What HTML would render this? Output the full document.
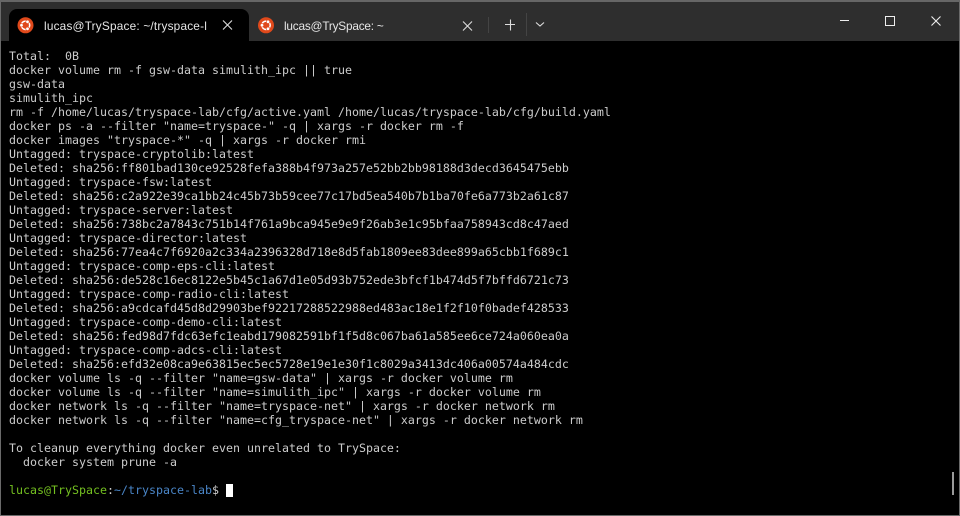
<!DOCTYPE html>
<html><head><meta charset="utf-8"><style>
html,body{margin:0;padding:0;background:#000}
#w{position:relative;width:960px;height:516px;overflow:hidden;background:#000}
#bar{position:absolute;left:0;top:0;width:960px;height:41px;background:#2e2e2e}
#edge{position:absolute;left:0;top:0;width:958px;height:514px;border:1px solid #6a6a6a;z-index:5}
#edge2{position:absolute;left:0;top:0;width:960px;height:2px;background:#666;z-index:5}
#tab{position:absolute;left:9px;top:9px;width:240px;height:32px;background:#000;border-radius:8px 8px 0 0}
.t{position:absolute;font:11.8px/16px "Liberation Sans","DejaVu Sans",sans-serif;color:#e6e6e6;white-space:nowrap;overflow:hidden}
pre{position:absolute;left:9px;top:49px;margin:0;font:11.63px/14px "DejaVu Sans Mono","Liberation Mono",monospace;color:#ccc;white-space:pre;letter-spacing:0}
.g{color:#74c020}.b{color:#4a86c8}
#cur{position:absolute;left:226px;top:484px;width:7px;height:13px;background:#fff}
#sb{position:absolute;left:952px;top:472px;width:2px;height:23px;background:#9a9a9a}
svg{position:absolute;overflow:visible}
</style></head><body><div id="w">
<div id="bar"></div><div id="edge"></div><div id="edge2"></div><div id="tab"></div>
<svg style="left:0;top:0" width="960" height="41" fill="none">
<g transform="translate(-.5 .3)"><circle cx="26" cy="25" r="8" fill="#e0491b"/><circle cx="26" cy="25" r="4.2" stroke="#fff" stroke-width="1.5"/><circle cx="22" cy="25" r="1.7" fill="#fff" stroke="#e0491b" stroke-width=".6"/><circle cx="28" cy="21.500" r="1.7" fill="#fff" stroke="#e0491b" stroke-width=".6"/><circle cx="28" cy="28.500" r="1.7" fill="#fff" stroke="#e0491b" stroke-width=".6"/></g>
<g transform="translate(240 .3)"><circle cx="26" cy="25" r="8" fill="#e0491b"/><circle cx="26" cy="25" r="4.2" stroke="#fff" stroke-width="1.5"/><circle cx="22" cy="25" r="1.7" fill="#fff" stroke="#e0491b" stroke-width=".6"/><circle cx="28" cy="21.500" r="1.7" fill="#fff" stroke="#e0491b" stroke-width=".6"/><circle cx="28" cy="28.500" r="1.7" fill="#fff" stroke="#e0491b" stroke-width=".6"/></g>
<path d="M223 20.500l9 9M232 20.500l-9 9" stroke="#ddd" stroke-width="1.1"/>
<path d="M463 21.500l9 9M472 21.500l-9 9" stroke="#ddd" stroke-width="1.1"/>
<path d="M488.500 17v16M526.500 13v23" stroke="#444"/>
<path d="M505 24.500h10M510.500 19.500v11" stroke="#ddd" stroke-width="1.1"/>
<path d="M536 22.500l4 3.500 4-3.500" stroke="#ddd" stroke-width="1.1"/>
<path d="M840 20.500h9" stroke="#eee"/>
<rect x="885.500" y="16.500" width="9" height="9" stroke="#eee"/>
<path d="M931.500 16.500l9 9M940.500 16.500l-9 9" stroke="#eee" stroke-width="1.1"/>
</svg>
<div class="t" style="left:44px;top:18px;width:163px;letter-spacing:.2px">lucas@TrySpace: ~/tryspace-lab</div>
<div class="t" style="left:284px;top:18px;letter-spacing:-.2px">lucas@TrySpace: ~</div>
<pre>Total:  0B
docker volume rm -f gsw-data simulith_ipc || true
gsw-data
simulith_ipc
rm -f /home/lucas/tryspace-lab/cfg/active.yaml /home/lucas/tryspace-lab/cfg/build.yaml
docker ps -a --filter "name=tryspace-" -q | xargs -r docker rm -f
docker images "tryspace-*" -q | xargs -r docker rmi
Untagged: tryspace-cryptolib:latest
Deleted: sha256:ff801bad130ce92528fefa388b4f973a257e52bb2bb98188d3decd3645475ebb
Untagged: tryspace-fsw:latest
Deleted: sha256:c2a922e39ca1bb24c45b73b59cee77c17bd5ea540b7b1ba70fe6a773b2a61c87
Untagged: tryspace-server:latest
Deleted: sha256:738bc2a7843c751b14f761a9bca945e9e9f26ab3e1c95bfaa758943cd8c47aed
Untagged: tryspace-director:latest
Deleted: sha256:77ea4c7f6920a2c334a2396328d718e8d5fab1809ee83dee899a65cbb1f689c1
Untagged: tryspace-comp-eps-cli:latest
Deleted: sha256:de528c16ec8122e5b45c1a67d1e05d93b752ede3bfcf1b474d5f7bffd6721c73
Untagged: tryspace-comp-radio-cli:latest
Deleted: sha256:a9cdcafd45d8d29903bef92217288522988ed483ac18e1f2f10f0badef428533
Untagged: tryspace-comp-demo-cli:latest
Deleted: sha256:fed98d7fdc63efc1eabd179082591bf1f5d8c067ba61a585ee6ce724a060ea0a
Untagged: tryspace-comp-adcs-cli:latest
Deleted: sha256:efd32e08ca9e63815ec5ec5728e19e1e30f1c8029a3413dc406a00574a484cdc
docker volume ls -q --filter "name=gsw-data" | xargs -r docker volume rm
docker volume ls -q --filter "name=simulith_ipc" | xargs -r docker volume rm
docker network ls -q --filter "name=tryspace-net" | xargs -r docker network rm
docker network ls -q --filter "name=cfg_tryspace-net" | xargs -r docker network rm

To cleanup everything docker even unrelated to TrySpace:
  docker system prune -a

<span class="g">lucas@TrySpace</span>:<span class="b">~/tryspace-lab</span>$</pre>
<div id="cur"></div><div id="sb"></div>
</div></body></html>
